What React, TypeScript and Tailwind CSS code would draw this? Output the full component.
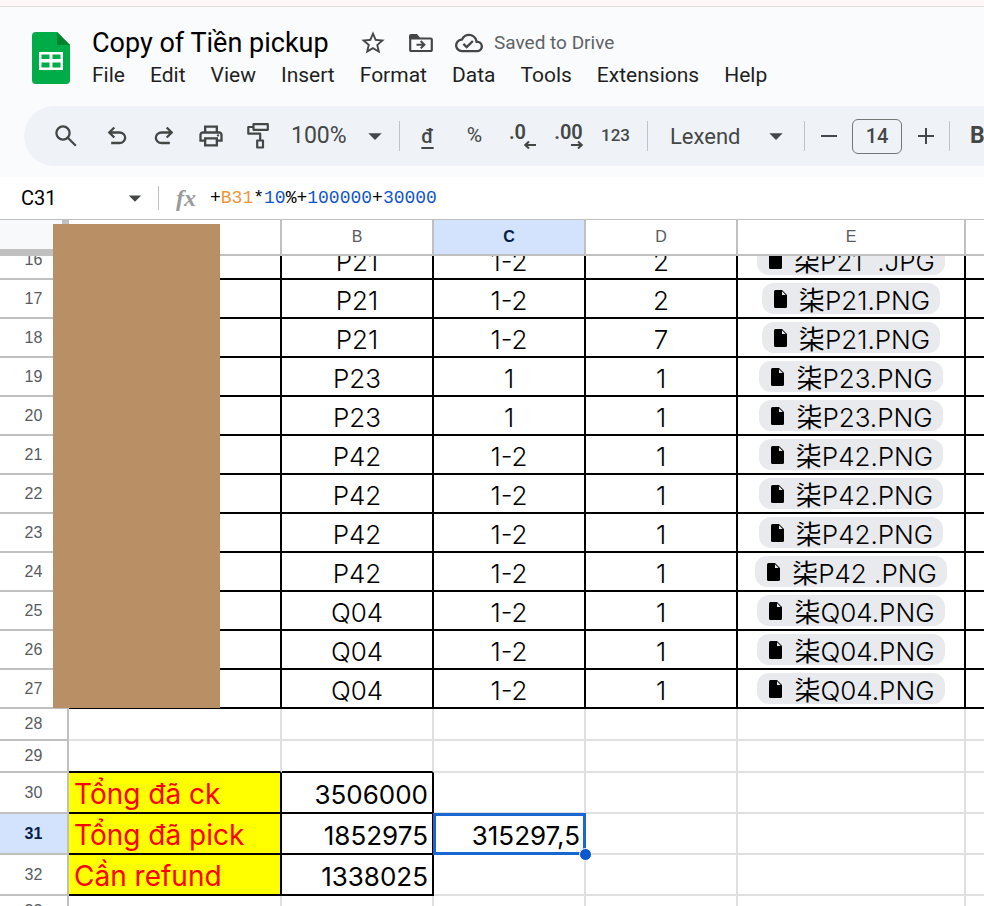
import type { ReactNode } from "react";
import { MdArrowDropDown, MdOutlineCloudDone, MdStarBorder } from "react-icons/md";

const UI = "font-['Roboto','Noto_Sans',sans-serif]";
const SHEET = "font-['Inter','Noto_Sans_CJK_SC',sans-serif]";

const MENUS = ["File", "Edit", "View", "Insert", "Format", "Data", "Tools", "Extensions", "Help"];

const ROWS = [
  { n: 16, b: "P21", c: "1-2", d: "2", file: "P21 \u00a0.JPG" },
  { n: 17, b: "P21", c: "1-2", d: "2", file: "P21.PNG" },
  { n: 18, b: "P21", c: "1-2", d: "7", file: "P21.PNG" },
  { n: 19, b: "P23", c: "1", d: "1", file: "P23.PNG" },
  { n: 20, b: "P23", c: "1", d: "1", file: "P23.PNG" },
  { n: 21, b: "P42", c: "1-2", d: "1", file: "P42.PNG" },
  { n: 22, b: "P42", c: "1-2", d: "1", file: "P42.PNG" },
  { n: 23, b: "P42", c: "1-2", d: "1", file: "P42.PNG" },
  { n: 24, b: "P42", c: "1-2", d: "1", file: "P42 .PNG" },
  { n: 25, b: "Q04", c: "1-2", d: "1", file: "Q04.PNG" },
  { n: 26, b: "Q04", c: "1-2", d: "1", file: "Q04.PNG" },
  { n: 27, b: "Q04", c: "1-2", d: "1", file: "Q04.PNG" },
];

const TOTALS = [
  { n: 30, label: "Tổng đã ck", value: "3506000", extra: "" },
  { n: 31, label: "Tổng đã pick", value: "1852975", extra: "315297,5" },
  { n: 32, label: "Cần refund", value: "1338025", extra: "" },
];

function SheetsLogo() {
  return (
    <svg viewBox="0 0 38 52" className="mt-1.5 h-[52px] w-[38px] shrink-0" aria-hidden="true">
      <path d="M4 0h21l13 13v35a4 4 0 0 1-4 4H4a4 4 0 0 1-4-4V4a4 4 0 0 1 4-4z" fill="#00ac47" />
      <path d="M25 0l13 13H25z" fill="#00832d" />
      <path
        d="M7 20h24v18H7zM9.500 22.500v4.500h8v-4.500zM20.500 22.500v4.500h8v-4.500zM9.500 30.500v5h8v-5zM20.500 30.500v5h8v-5z"
        fill="#fff"
        fillRule="evenodd"
      />
    </svg>
  );
}

function MoveIcon() {
  return (
    <svg viewBox="0 0 24 18" className="h-[18px] w-6" fill="none" stroke="currentColor" strokeWidth="2.200" aria-hidden="true">
      <path d="M1.200 4.500h20.600q1 0 1 1V16q0 1-1 1H2.200q-1 0-1-1z" strokeLinejoin="round" />
      <path d="M0 5V2q0-2 2-2h6l3 3.500v1.500z" fill="currentColor" stroke="none" />
      <path d="M7.500 10.700h7M11.700 7l3.700 3.700-3.700 3.700" strokeWidth="2" />
    </svg>
  );
}

function SymbolIcon({ d }: { d: string }) {
  return (
    <svg viewBox="0 -960 960 960" className="size-7" fill="currentColor" aria-hidden="true">
      <path d={d} />
    </svg>
  );
}

const UNDO =
  "M280-200v-80h284q63 0 109.500-40T720-420q0-60-46.500-100T564-560H312l104 104-56 56-200-200 200-200 56 56-104 104h252q97 0 166.500 63T800-420q0 94-69.500 157T564-200H280Z";
const REDO =
  "M396-200q-97 0-166.500-63T160-420q0-94 69.500-157T396-640h252L544-744l56-56 200 200-200 200-56-56 104-104H396q-63 0-109.500 40T240-420q0 60 46.500 100T396-280h284v80H396Z";
const PRINT =
  "M640-640v-120H320v120h-80v-200h480v200h-80Zm80 180q17 0 28.500-11.500T760-500q0-17-11.500-28.500T720-540q-17 0-28.500 11.500T680-500q0 17 11.500 28.500T720-460Zm-80 260v-160H320v160h320Zm80 80H240v-160H80v-240q0-51 35-85.500t85-34.500h560q51 0 85.500 34.500T880-520v240H720v160Zm80-240v-160q0-17-11.500-28.500T760-560H200q-17 0-28.500 11.500T160-520v160h80v-80h480v80h80Z";

function SearchIcon() {
  return (
    <svg viewBox="0 0 22 22" className="size-[22px]" fill="none" stroke="currentColor" strokeWidth="2.300" aria-hidden="true">
      <circle cx="8" cy="8" r="6.600" />
      <path d="M12.800 12.800l8 8" />
    </svg>
  );
}

function PaintIcon() {
  return (
    <svg viewBox="0 0 22 26" className="h-[26px] w-[22px]" fill="none" stroke="currentColor" strokeWidth="2.200" strokeLinejoin="round" aria-hidden="true">
      <path d="M6.500 1.200h14.300v5.600H6.500zM6.500 4H1.300v6.700h11.900v6.800M10.200 17.500h5.800v7h-5.800z" />
    </svg>
  );
}

function DecimalIcon({ digits, right }: { digits: string; right?: boolean }) {
  return (
    <span className={right ? "flex flex-col" : "mr-2 flex flex-col"}>
      <span className="text-[20px] leading-[18px] font-semibold">{digits}</span>
      <svg viewBox="0 0 12 8" className={right ? "h-2 w-3 self-end" : "-mr-2.5 h-2 w-3 self-end"} fill="none" stroke="currentColor" strokeWidth="2" aria-hidden="true">
        <path d={right ? "M0 4h10.500M7 .500L10.700 4 7 7.500" : "M12 4H1.500M5 .500L1.300 4 5 7.500"} />
      </svg>
    </span>
  );
}

function FileIcon() {
  return (
    <svg viewBox="0 0 13 18" className="h-[18px] w-[13px] shrink-0" aria-hidden="true">
      <path d="M1.500 0H8l5 5v11.500q0 1.500-1.500 1.500h-10Q0 18 0 16.500v-15Q0 0 1.500 0z" />
      <path d="M8 1.300V5h3.700z" fill="#e8eaed" />
    </svg>
  );
}

function ToolButton({ label, children }: { label: string; children: ReactNode }) {
  return (
    <button type="button" aria-label={label} className="flex h-10 w-[47px] shrink-0 items-center justify-center">
      {children}
    </button>
  );
}

function Divider() {
  return <span className="h-[30px] w-px shrink-0 bg-[#c0c3c8]" />;
}

function Header() {
  return (
    <header className="flex items-start pt-[19px] pl-8">
      <SheetsLogo />
      <div className="ml-[22px] min-w-0 flex-1">
        <div className="flex h-[34px] items-center text-[#444746]">
          <input
            aria-label="Document name"
            defaultValue="Copy of Tiền pickup"
            className="w-[267px] shrink-0 bg-transparent font-['Roboto','Noto_Sans',sans-serif] text-[27px] text-black outline-none"
          />
          <button type="button" aria-label="Star">
            <MdStarBorder className="size-7" />
          </button>
          <button type="button" aria-label="Move" className="ml-[22px]">
            <MoveIcon />
          </button>
          <button type="button" className="ml-[22px] flex shrink-0 items-center gap-[11px] text-[19px] whitespace-nowrap text-[#5f6368]">
            <MdOutlineCloudDone className="size-7 text-[#444746]" />
            Saved to Drive
          </button>
        </div>
        <nav className="flex h-8 items-center gap-[25px] text-[21px] text-[#1f1f1f]">
          {MENUS.map((m) => (
            <button key={m} type="button" className="shrink-0">
              {m}
            </button>
          ))}
        </nav>
      </div>
    </header>
  );
}

function Toolbar() {
  return (
    <div className="mt-3.5 ml-6 flex h-[60px] items-center overflow-hidden rounded-l-full bg-[#eff3f8] pl-[18px] text-[#444746]">
      <div className="mr-1">
        <ToolButton label="Search"><SearchIcon /></ToolButton>
      </div>
      <ToolButton label="Undo"><SymbolIcon d={UNDO} /></ToolButton>
      <ToolButton label="Redo"><SymbolIcon d={REDO} /></ToolButton>
      <ToolButton label="Print"><SymbolIcon d={PRINT} /></ToolButton>
      <ToolButton label="Paint format"><PaintIcon /></ToolButton>
      <div className="relative mr-2 w-[110px] shrink-0">
        <select aria-label="Zoom" className="w-full appearance-none bg-transparent pl-2.5 text-[23px] outline-none">
          <option>100%</option>
        </select>
        <MdArrowDropDown className="pointer-events-none absolute top-1/2 right-0 size-8 -translate-y-1/2" />
      </div>
      <Divider />
      <div className="mr-2 ml-1 flex">
        <ToolButton label="Format as currency"><span className="text-[20px] font-medium underline underline-offset-4">đ</span></ToolButton>
        <ToolButton label="Format as percent"><span className="text-[21px]">%</span></ToolButton>
        <ToolButton label="Decrease decimal places"><DecimalIcon digits=".0" /></ToolButton>
        <ToolButton label="Increase decimal places"><DecimalIcon digits=".00" right /></ToolButton>
        <ToolButton label="More formats"><span className="text-[17px] font-medium">123</span></ToolButton>
      </div>
      <Divider />
      <div className="relative mr-2 w-[148px] shrink-0">
        <select aria-label="Font" className="w-full appearance-none bg-transparent pl-[22px] text-[22px] outline-none">
          <option>Lexend</option>
        </select>
        <MdArrowDropDown className="pointer-events-none absolute top-1/2 right-1 size-8 -translate-y-1/2" />
      </div>
      <Divider />
      <ToolButton label="Decrease font size"><span className="h-0.5 w-4 bg-[#444746]" /></ToolButton>
      <input
        aria-label="Font size"
        defaultValue="14"
        className="h-[35px] w-[50px] shrink-0 rounded-md border border-[#747775] bg-transparent text-center text-[20px] font-medium outline-none"
      />
      <ToolButton label="Increase font size">
        <svg viewBox="0 0 16 16" className="size-4" stroke="currentColor" strokeWidth="2" aria-hidden="true">
          <path d="M8 0v16M0 8h16" />
        </svg>
      </ToolButton>
      <Divider />
      <button type="button" aria-label="Bold" className="ml-5 text-[23px] font-bold">B</button>
    </div>
  );
}

function FormulaBar() {
  return (
    <div className="mt-[11px] flex h-[42px] items-center bg-white">
      <input
        aria-label="Name box"
        defaultValue="C31"
        className="w-[120px] shrink-0 bg-transparent pl-[21px] text-[20px] text-black outline-none"
      />
      <button type="button" aria-label="Named ranges" className="text-[#444746]">
        <MdArrowDropDown className="size-[30px]" />
      </button>
      <span className="ml-2 h-6 w-px bg-[#c0c0c0]" />
      <span className="ml-[17px] w-[34px] font-['Liberation_Serif',serif] text-[24px] leading-6 font-bold text-[#9a9a9a] italic" aria-hidden="true">
        fx
      </span>
      <div
        role="textbox"
        aria-label="Formula"
        contentEditable
        suppressContentEditableWarning
        className="flex-1 font-['Liberation_Mono',monospace] text-[18px] text-black outline-none"
      >
        +<span className="text-[#f0943a]">B31</span>*<span className="text-[#1155cc]">10</span>%+
        <span className="text-[#1155cc]">100000</span>+<span className="text-[#1155cc]">30000</span>
      </div>
    </div>
  );
}

function RowHead({ n, active }: { n: number; active?: boolean }) {
  return (
    <th
      scope="row"
      className={
        active
          ? "border-r-2 border-b-2 border-[#c0c0c0] bg-[#d3e3fd] text-[16px] leading-4 font-bold text-[#041e49]"
          : "border-r-2 border-b-2 border-[#c0c0c0] text-[16px] leading-4 font-normal text-[#575b5f]"
      }
    >
      {n}
    </th>
  );
}

const INK = "border-r-2 border-b-2 border-black p-0 last:border-r-0";
const FAINT = "border-r-2 border-b-2 border-[#e0e0e0] p-0 last:border-r-0";

function DataCell({ clipped, children }: { clipped?: boolean; children?: ReactNode }) {
  return (
    <td className={INK}>
      <div className={clipped ? "flex h-[22px] items-end justify-center overflow-hidden" : "flex h-[37px] justify-center"}>
        <div className="flex h-[37px] shrink-0 items-center whitespace-pre">{children}</div>
      </div>
    </td>
  );
}

function EmptyRow({ n, last }: { n: number; last?: boolean }) {
  const edge = last ? "border-r-2 border-b-2 border-r-[#e0e0e0] border-b-black" : FAINT;
  return (
    <tr className="h-8">
      <RowHead n={n} />
      <td className={edge} />
      <td className={edge} />
      <td className={FAINT} />
      <td className={FAINT} />
      <td className={FAINT} />
      <td className={FAINT} />
    </tr>
  );
}

function Grid() {
  const colHead = "border-t border-r-2 border-b-2 border-[#c0c0c0] p-0 text-[16px] font-normal text-[#575b5f] last:border-r-0";
  const text = `${SHEET} pt-1 text-[26px] leading-[33px] font-light`;
  const total = `${SHEET} pt-1 pr-1 text-right text-[26px] leading-[35px]`;
  return (
    <main className="relative overflow-hidden bg-white">
      <table className="w-full table-fixed border-separate border-spacing-0 font-['Liberation_Sans',sans-serif]">
        <colgroup>
          <col className="w-[69px]" />
          <col className="w-[213px]" />
          <col className="w-[152px]" />
          <col className="w-[152px]" />
          <col className="w-[152px]" />
          <col className="w-[228px]" />
          <col />
        </colgroup>
        <thead>
          <tr className="h-[37px]">
            <td className="border-t border-r-[7px] border-b-[7px] border-[#c0c0c0] bg-[#f8f9fa] p-0" />
            <th scope="col" className={colHead}>A</th>
            <th scope="col" className={colHead}>B</th>
            <th scope="col" className="border-t border-r-2 border-b-2 border-[#c0c0c0] bg-[#d3e3fd] p-0 text-[16px] font-bold text-[#041e49]">C</th>
            <th scope="col" className={colHead}>D</th>
            <th scope="col" className={colHead}>E</th>
            <th scope="col" className={colHead} aria-label="F" />
          </tr>
        </thead>
        <tbody className="text-black">
          {ROWS.map((r, i) => {
            const clipped = i === 0;
            return (
              <tr key={r.n}>
                {clipped ? (
                  <th scope="row" className="border-r-2 border-b-2 border-[#c0c0c0] p-0 text-[16px] font-normal text-[#575b5f]">
                    <div className="flex h-[22px] items-end justify-center overflow-hidden">
                      <div className="flex h-[37px] shrink-0 items-center">{r.n}</div>
                    </div>
                  </th>
                ) : (
                  <RowHead n={r.n} />
                )}
                <DataCell clipped={clipped} />
                <DataCell clipped={clipped}><span className={text}>{r.b}</span></DataCell>
                <DataCell clipped={clipped}><span className={text}>{r.c}</span></DataCell>
                <DataCell clipped={clipped}><span className={text}>{r.d}</span></DataCell>
                <DataCell clipped={clipped}>
                  <a href="#file" className="flex h-[31px] items-center gap-3 rounded-xl bg-[#e8eaed] pr-2.5 pl-3">
                    <FileIcon />
                    <span className={text}>
                      <span className="font-normal">柒</span>
                      {r.file}
                    </span>
                  </a>
                </DataCell>
                <DataCell clipped={clipped} />
              </tr>
            );
          })}
          <EmptyRow n={28} />
          <EmptyRow n={29} last />
          {TOTALS.map((t) => (
            <tr key={t.n} className="h-[41px]">
              <RowHead n={t.n} active={t.n === 31} />
              <td className={`${INK} bg-[#ffff00]`}>
                <div className={`${SHEET} pt-1 pl-[5px] text-[28px] leading-[35px] whitespace-nowrap text-[#ff0000]`}>{t.label}</div>
              </td>
              <td className={INK}>
                <div className={total}>{t.value}</div>
              </td>
              <td className={`${FAINT} relative`}>
                {t.extra && (
                  <>
                    <div className={total}>{t.extra}</div>
                    <span className="absolute -top-px -right-0.5 -bottom-0.5 -left-px z-10 border-3 border-[#1967d2]" />
                    <span className="absolute -right-2 -bottom-2 z-20 size-[13px] rounded-full border border-white bg-[#0b57d0]" />
                  </>
                )}
              </td>
              <td className={FAINT} />
              <td className={FAINT} />
              <td className={FAINT} />
            </tr>
          ))}
          <EmptyRow n={33} />
        </tbody>
      </table>
      <div className="absolute top-[5px] left-[53px] z-10 h-[484px] w-[167px] bg-[#b98f65]" />
    </main>
  );
}

export default function App() {
  return (
    <div className={`${UI} h-screen overflow-hidden bg-[#f9fbfd]`}>
      <div className="h-[7px] border-b border-[#dfdddd] bg-[#fdf7f7]" />
      <Header />
      <Toolbar />
      <FormulaBar />
      <Grid />
    </div>
  );
}
